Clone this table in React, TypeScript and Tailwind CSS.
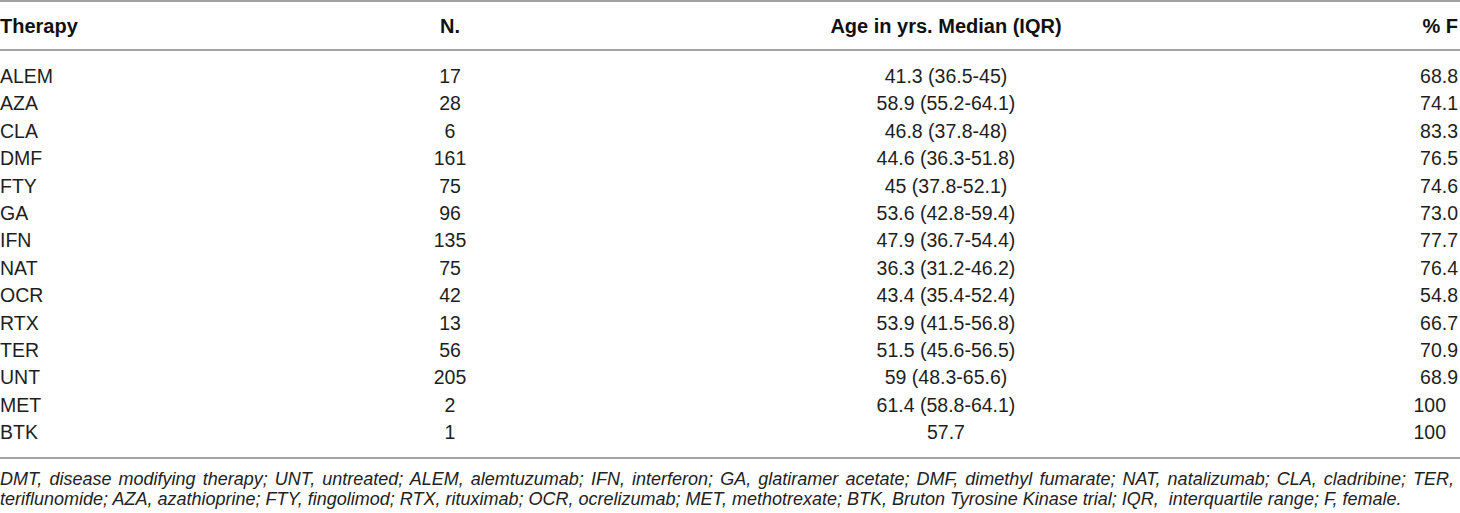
const rows = [
  { therapy: 'ALEM', n: '17', age: '41.3 (36.5-45)', f: '68.8' },
  { therapy: 'AZA', n: '28', age: '58.9 (55.2-64.1)', f: '74.1' },
  { therapy: 'CLA', n: '6', age: '46.8 (37.8-48)', f: '83.3' },
  { therapy: 'DMF', n: '161', age: '44.6 (36.3-51.8)', f: '76.5' },
  { therapy: 'FTY', n: '75', age: '45 (37.8-52.1)', f: '74.6' },
  { therapy: 'GA', n: '96', age: '53.6 (42.8-59.4)', f: '73.0' },
  { therapy: 'IFN', n: '135', age: '47.9 (36.7-54.4)', f: '77.7' },
  { therapy: 'NAT', n: '75', age: '36.3 (31.2-46.2)', f: '76.4' },
  { therapy: 'OCR', n: '42', age: '43.4 (35.4-52.4)', f: '54.8' },
  { therapy: 'RTX', n: '13', age: '53.9 (41.5-56.8)', f: '66.7' },
  { therapy: 'TER', n: '56', age: '51.5 (45.6-56.5)', f: '70.9' },
  { therapy: 'UNT', n: '205', age: '59 (48.3-65.6)', f: '68.9' },
  { therapy: 'MET', n: '2', age: '61.4 (58.8-64.1)', f: '100' },
  { therapy: 'BTK', n: '1', age: '57.7', f: '100' },
];

const cols = 'grid grid-cols-[380px_140px_852px_1fr]';

export default function App() {
  return (
    <div className="w-[1460px] h-[513px] bg-white text-[#1e1e1e] font-['Liberation_Sans',Arial,sans-serif] overflow-hidden">
      {/* Header */}
      <div className={`${cols} h-[51px] items-center border-t-2 border-b-2 border-[#a3a3a3] text-[20px] font-bold text-[#111]`}>
        <div>Therapy</div>
        <div className="text-center">N.</div>
        <div className="text-center">Age in yrs. Median (IQR)</div>
        <div className="text-right pr-[2px]">% F</div>
      </div>

      {/* Body */}
      <div className="pt-[12px] pb-[10px] border-b-2 border-[#a3a3a3] text-[19.5px] leading-[27.4px]">
        {rows.map((r) => (
          <div key={r.therapy} className={cols}>
            <div>{r.therapy}</div>
            <div className="text-center">{r.n}</div>
            <div className="text-center">{r.age}</div>
            <div className={r.f === '100' ? 'text-right pr-[14px]' : 'text-right pr-[2px]'}>{r.f}</div>
          </div>
        ))}
      </div>

      {/* Footnote */}
      <div className="pt-[10px] text-[18px] leading-[20px] italic text-[#222]">
        <p className="text-justify [text-align-last:justify] pr-[6px]">
          DMT, disease modifying therapy; UNT, untreated; ALEM, alemtuzumab; IFN, interferon; GA, glatiramer acetate; DMF, dimethyl fumarate; NAT, natalizumab; CLA, cladribine; TER,
        </p>
        <p>
          teriflunomide; AZA, azathioprine; FTY, fingolimod; RTX, rituximab; OCR, ocrelizumab; MET, methotrexate; BTK, Bruton Tyrosine Kinase trial; IQR,{'\u00a0'} interquartile range; F, female.
        </p>
      </div>
    </div>
  );
}
